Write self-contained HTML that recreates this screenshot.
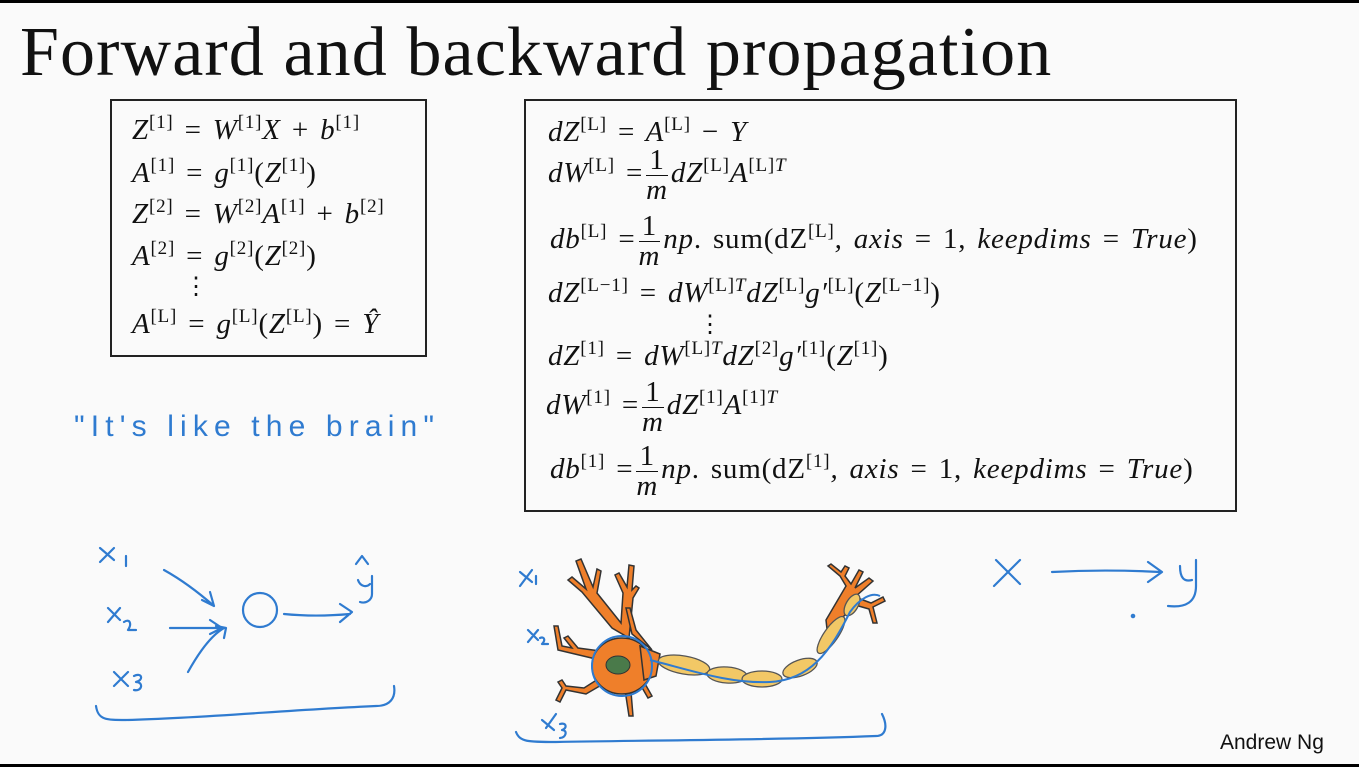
<!DOCTYPE html>
<html><head><style>
body{margin:0;width:1359px;height:767px;background:#fafafa;position:relative;overflow:hidden;font-family:"Liberation Serif",serif;color:#111}
.bar{position:absolute;left:0;width:1359px;background:#000}
.t{position:absolute;white-space:nowrap}
.box{position:absolute;border:2px solid #222;box-sizing:border-box}
.m{position:absolute;white-space:nowrap;font-size:29px;font-style:italic;letter-spacing:0.8px;word-spacing:3px}
.m sup{font-size:19px;font-style:normal;vertical-align:11px}
.m .r{font-style:normal}
.fr{display:inline-block;vertical-align:middle;text-align:center;font-style:normal;line-height:29px;margin:0 3px}
.fr span{display:block}
.fr .n{border-bottom:1.5px solid #111;padding:0 3px}
.fr .d{font-style:italic}
</style></head><body>
<div class="bar" style="top:0;height:3px"></div>
<div class="bar" style="top:764px;height:3px"></div>
<div class="t" style="left:20px;top:13px;font-size:70px;letter-spacing:1.1px">Forward and backward propagation</div>

<div class="box" style="left:110px;top:99px;width:317px;height:258px"></div>
<div class="m" style="left:132px;top:112px">Z<sup>[1]</sup> <span class="r">=</span> W<sup>[1]</sup>X <span class="r">+</span> b<sup>[1]</sup></div>
<div class="m" style="left:132px;top:155px">A<sup>[1]</sup> <span class="r">=</span> g<sup>[1]</sup><span class="r">(</span>Z<sup>[1]</sup><span class="r">)</span></div>
<div class="m" style="left:132px;top:196px">Z<sup>[2]</sup> <span class="r">=</span> W<sup>[2]</sup>A<sup>[1]</sup> <span class="r">+</span> b<sup>[2]</sup></div>
<div class="m" style="left:132px;top:238px">A<sup>[2]</sup> <span class="r">=</span> g<sup>[2]</sup><span class="r">(</span>Z<sup>[2]</sup><span class="r">)</span></div>
<div class="m" style="left:184px;top:272px;font-style:normal;font-size:24px">⋮</div>
<div class="m" style="left:132px;top:306px">A<sup>[L]</sup> <span class="r">=</span> g<sup>[L]</sup><span class="r">(</span>Z<sup>[L]</sup><span class="r">)</span> <span class="r">=</span> Ŷ</div>

<div class="box" style="left:524px;top:99px;width:713px;height:413px"></div>
<div class="m" style="left:548px;top:114px">dZ<sup>[L]</sup> <span class="r">=</span> A<sup>[L]</sup> <span class="r">−</span> Y</div>
<div class="m" style="left:548px;top:146px">dW<sup>[L]</sup> <span class="r">=</span><span class="fr"><span class="n">1</span><span class="d">m</span></span>dZ<sup>[L]</sup>A<sup>[L]<i>T</i></sup></div>
<div class="m" style="left:550px;top:212px">db<sup>[L]</sup> <span class="r">=</span><span class="fr"><span class="n">1</span><span class="d">m</span></span>np<span class="r">. sum(dZ</span><sup>[L]</sup>, axis <span class="r">= 1,</span> keepdims <span class="r">=</span> True<span class="r">)</span></div>
<div class="m" style="left:548px;top:275px">dZ<sup>[L−1]</sup> <span class="r">=</span> dW<sup>[L]<i>T</i></sup>dZ<sup>[L]</sup>g′<sup>[L]</sup><span class="r">(</span>Z<sup>[L−1]</sup><span class="r">)</span></div>
<div class="m" style="left:698px;top:310px;font-style:normal;font-size:24px">⋮</div>
<div class="m" style="left:548px;top:338px">dZ<sup>[1]</sup> <span class="r">=</span> dW<sup>[L]<i>T</i></sup>dZ<sup>[2]</sup>g′<sup>[1]</sup><span class="r">(</span>Z<sup>[1]</sup><span class="r">)</span></div>
<div class="m" style="left:546px;top:378px">dW<sup>[1]</sup> <span class="r">=</span><span class="fr"><span class="n">1</span><span class="d">m</span></span>dZ<sup>[1]</sup>A<sup>[1]<i>T</i></sup></div>
<div class="m" style="left:550px;top:442px">db<sup>[1]</sup> <span class="r">=</span><span class="fr"><span class="n">1</span><span class="d">m</span></span>np<span class="r">. sum(dZ</span><sup>[1]</sup>, axis <span class="r">= 1,</span> keepdims <span class="r">=</span> True<span class="r">)</span></div>

<svg width="1359" height="767" style="position:absolute;left:0;top:0" fill="none" stroke="#2f7bd0" stroke-width="2.2" stroke-linecap="round" stroke-linejoin="round">
<g font-family="Liberation Sans, sans-serif" fill="#2f7bd0" stroke="none">
<text x="74" y="436" font-size="30" textLength="360" lengthAdjust="spacing">"It's  like  the  brain"</text>
</g>
<path d="M100 548l14 12M114 548l-14 14M126 556v10"/>
<path d="M108 608l12 12M120 608l-12 14M124 622c6-4 8 2 4 8l8 0"/>
<path d="M114 672l14 14M128 672l-14 14M134 676c8-4 10 4 2 6c8 0 6 10-2 8"/>
<path d="M164 570c18 10 34 22 50 36M202 600l12 6l-4-14"/>
<path d="M170 628h50M210 620l12 8l-12 6"/>
<path d="M188 672c10-18 22-36 36-44M216 626l10 2l-2 10"/>
<circle cx="260" cy="610" r="17"/>
<path d="M284 614c20 2 44 2 66 0M340 604l12 8l-12 10"/>
<path d="M356 564l6-8l6 8M358 580c2 6 8 8 12 4M372 576v18c0 6-6 10-12 8"/>
<path d="M96 706c2 14 10 14 30 14c80-2 160-10 250-14c14 0 20-8 18-20"/>
<path d="M996 560l24 24M1020 560l-26 26"/>
<path d="M1052 572c36-2 70-2 108 0M1148 562l14 10l-14 10"/>
<path d="M1180 566c0 12 4 16 12 14M1196 560v26c0 16-10 22-28 20"/>
<circle cx="1133" cy="616" r="1.2"/>
<path d="M520 572l12 10M532 570l-12 16M536 576v8"/>
<path d="M528 630l10 10M538 630l-10 12M540 638c4-2 6 2 2 6h6"/>
<path d="M542 720l12 10M556 714l-10 14M560 724c6-2 8 4 2 6c6 0 4 8-2 8"/>
<path d="M516 732c4 10 12 10 40 10c110-2 220-2 320-6c10 0 12-10 6-22"/>
</svg>
<svg width="1359" height="767" style="position:absolute;left:0;top:0">
<g stroke="#333" stroke-width="1.5" fill="#ef7f2a">
<path d="M612 628l-30-36l-14 -12l4-3 14 12 -10-28 5-2 12 28 4-18 4 2-4 22 24 30 2-30-8-18 4-2 8 14 2-22 5 1-2 24 4-4 3 2-6 10-4 40z"/>
<path d="M600 660l-42 -10 -4-24 4 0 4 20 10 2-8-10 4-2 10 12 30 4z"/>
<path d="M610 680l-24 14 -20 -4 -6 12 -4-2 6-12 -4-6 4-2 4 6 18 2 22-14z"/>
<path d="M625 690l4 26 4 0-2-24z"/>
<path d="M640 684l8 14 4-2-8-14z"/>
<path d="M652 650l-20 -16 -6-26 4 0 6 22z"/>
<ellipse cx="622" cy="666" rx="30" ry="28"/>
<path d="M640 646l20 8l-4 22l-12 4z"/>
<path d="M826 620l20-34 -6-10 -12-10 3-2 10 8 4-6 4 2-4 8 6 8 8-14 4 2-8 16 14-10 4 3-18 16 16 6 12-6 2 4-12 6 4 16-4 0-4-14-14-4-14 14-12 28z"/>
</g>
<ellipse cx="618" cy="665" rx="12" ry="9" fill="#4a7a4a" stroke="#333"/>
<g fill="#f2c866" stroke="#555" stroke-width="1.3">
<ellipse cx="684" cy="665" rx="26" ry="9" transform="rotate(10 684 665)"/>
<ellipse cx="727" cy="675" rx="20" ry="8" transform="rotate(4 727 675)"/>
<ellipse cx="762" cy="679" rx="20" ry="8"/>
<ellipse cx="800" cy="668" rx="18" ry="8" transform="rotate(-20 800 668)"/>
<ellipse cx="831" cy="635" rx="22" ry="7" transform="rotate(-55 831 635)"/>
<ellipse cx="852" cy="605" rx="12" ry="6" transform="rotate(-60 852 605)"/>
</g>
<g fill="none" stroke="#2f7bd0" stroke-width="2">
<ellipse cx="622" cy="666" rx="30" ry="30"/>
<path d="M650 660c40 10 80 24 120 22c40-2 60-30 80-70c10-14 22-20 30-16"/>
</g>
</svg>
<div class="t" style="left:1220px;top:731px;font-family:'Liberation Sans',sans-serif;font-size:21px;color:#111">Andrew Ng</div>
</body></html>
